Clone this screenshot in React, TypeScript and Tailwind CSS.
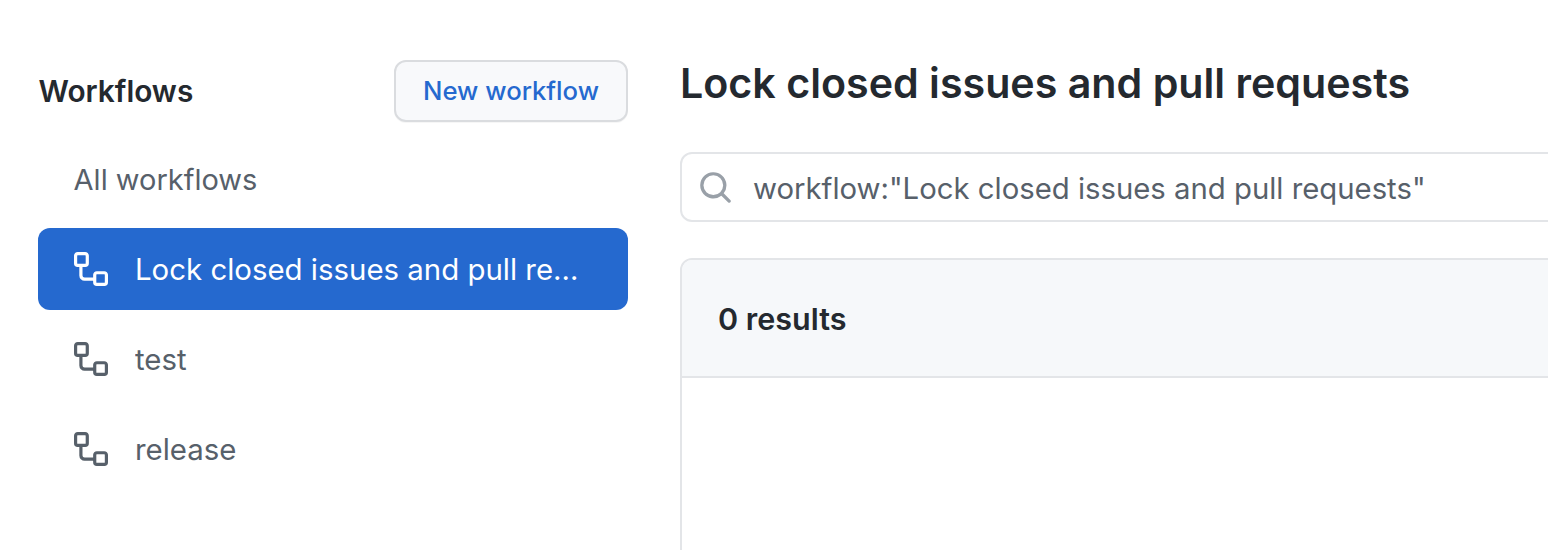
import React from "react";

const WORKFLOW_PATH =
  "M0 1.75C0 .784.784 0 1.75 0h3.5C6.216 0 7 .784 7 1.75v3.5A1.75 1.75 0 0 1 5.25 7H4v4a1 1 0 0 0 1 1h4v-1.25C9 9.784 9.784 9 10.75 9h3.5c.966 0 1.75.784 1.75 1.75v3.5A1.75 1.75 0 0 1 14.25 16h-3.5A1.75 1.75 0 0 1 9 14.25v-.75H5A2.5 2.5 0 0 1 2.5 11V7h-.75A1.75 1.75 0 0 1 0 5.25Zm1.75-.25a.25.25 0 0 0-.25.25v3.5c0 .138.112.25.25.25h3.5a.25.25 0 0 0 .25-.25v-3.5a.25.25 0 0 0-.25-.25Zm9 9a.25.25 0 0 0-.25.25v3.5c0 .138.112.25.25.25h3.5a.25.25 0 0 0 .25-.25v-3.5a.25.25 0 0 0-.25-.25Z";

function WorkflowIcon() {
  return (
    <svg viewBox="0 0 16 16" fill="currentColor" className="w-[34px] h-[34px] shrink-0">
      <path d={WORKFLOW_PATH} />
    </svg>
  );
}

function SearchIcon() {
  return (
    <svg viewBox="0 0 16 16" fill="currentColor" className="w-[35px] h-[35px] shrink-0 text-[#99a0a8]">
      <path d="M10.68 11.74a6 6 0 0 1-7.922-8.982 6 6 0 0 1 8.982 7.922l3.04 3.04a.749.749 0 0 1-.326 1.275.749.749 0 0 1-.734-.215ZM11.5 7a4.499 4.499 0 1 0-8.997 0A4.499 4.499 0 0 0 11.5 7Z" />
    </svg>
  );
}

function NavItem({ label, active }: { label: string; active?: boolean }) {
  return (
    <div
      className={
        "flex items-center gap-[27px] h-[82px] pl-[36px] pr-[46px] rounded-xl text-[29.4px] " +
        (active ? "bg-[#2569cf] text-white" : "text-[#57606a]")
      }
    >
      <WorkflowIcon />
      <span className="truncate pt-0.5">{label}</span>
    </div>
  );
}

export default function App() {
  return (
    <div className="h-[550px] w-[1548px] overflow-hidden bg-white flex font-['Inter',sans-serif]">
      {/* Sidebar */}
      <div className="w-[590px] ml-[38px] shrink-0 pt-[60px]">
        <div className="flex items-center justify-between h-[62px]">
          <span className="text-[29.8px] font-semibold text-[#24292f] pl-[0.5px]">Workflows</span>
          <button className="w-[234px] h-[62px] rounded-xl border-2 border-[#dadcdf] bg-[#f8f9fb] text-[#2569cf] text-[25.7px] font-medium shadow-[0_1px_0_rgba(27,31,36,0.04)]">
            New workflow
          </button>
        </div>
        <div className="h-[106px] flex items-center pl-[35.6px] pt-2.5 text-[29px] text-[#57606a]">All workflows</div>
        <div className="flex flex-col gap-2">
          <NavItem label="Lock closed issues and pull requests" active />
          <NavItem label="test" />
          <NavItem label="release" />
        </div>
      </div>

      {/* Main */}
      <div className="ml-[52px] w-[1000px] shrink-0 pt-[59px]">
        <h1 className="text-[41.2px] leading-[48px] font-semibold text-[#24292f]">Lock closed issues and pull requests</h1>
        <div className="mt-[45px] h-[70px] flex items-center gap-[20px] pl-[16px] border-2 border-[#e3e5e8] rounded-xl text-[29.3px] text-[#57606a]">
          <SearchIcon />
          <span className="pt-1">workflow:"Lock closed issues and pull requests"</span>
        </div>
        <div className="mt-[36px] h-[400px] border-2 border-[#e3e5e8] rounded-xl overflow-hidden">
          <div className="h-[118px] flex items-center pl-[36px] pt-0.5 bg-[#f6f8fa] border-b-2 border-[#e3e5e8] text-[30.5px] font-semibold text-[#24292f]">
            0 results
          </div>
        </div>
      </div>
    </div>
  );
}
